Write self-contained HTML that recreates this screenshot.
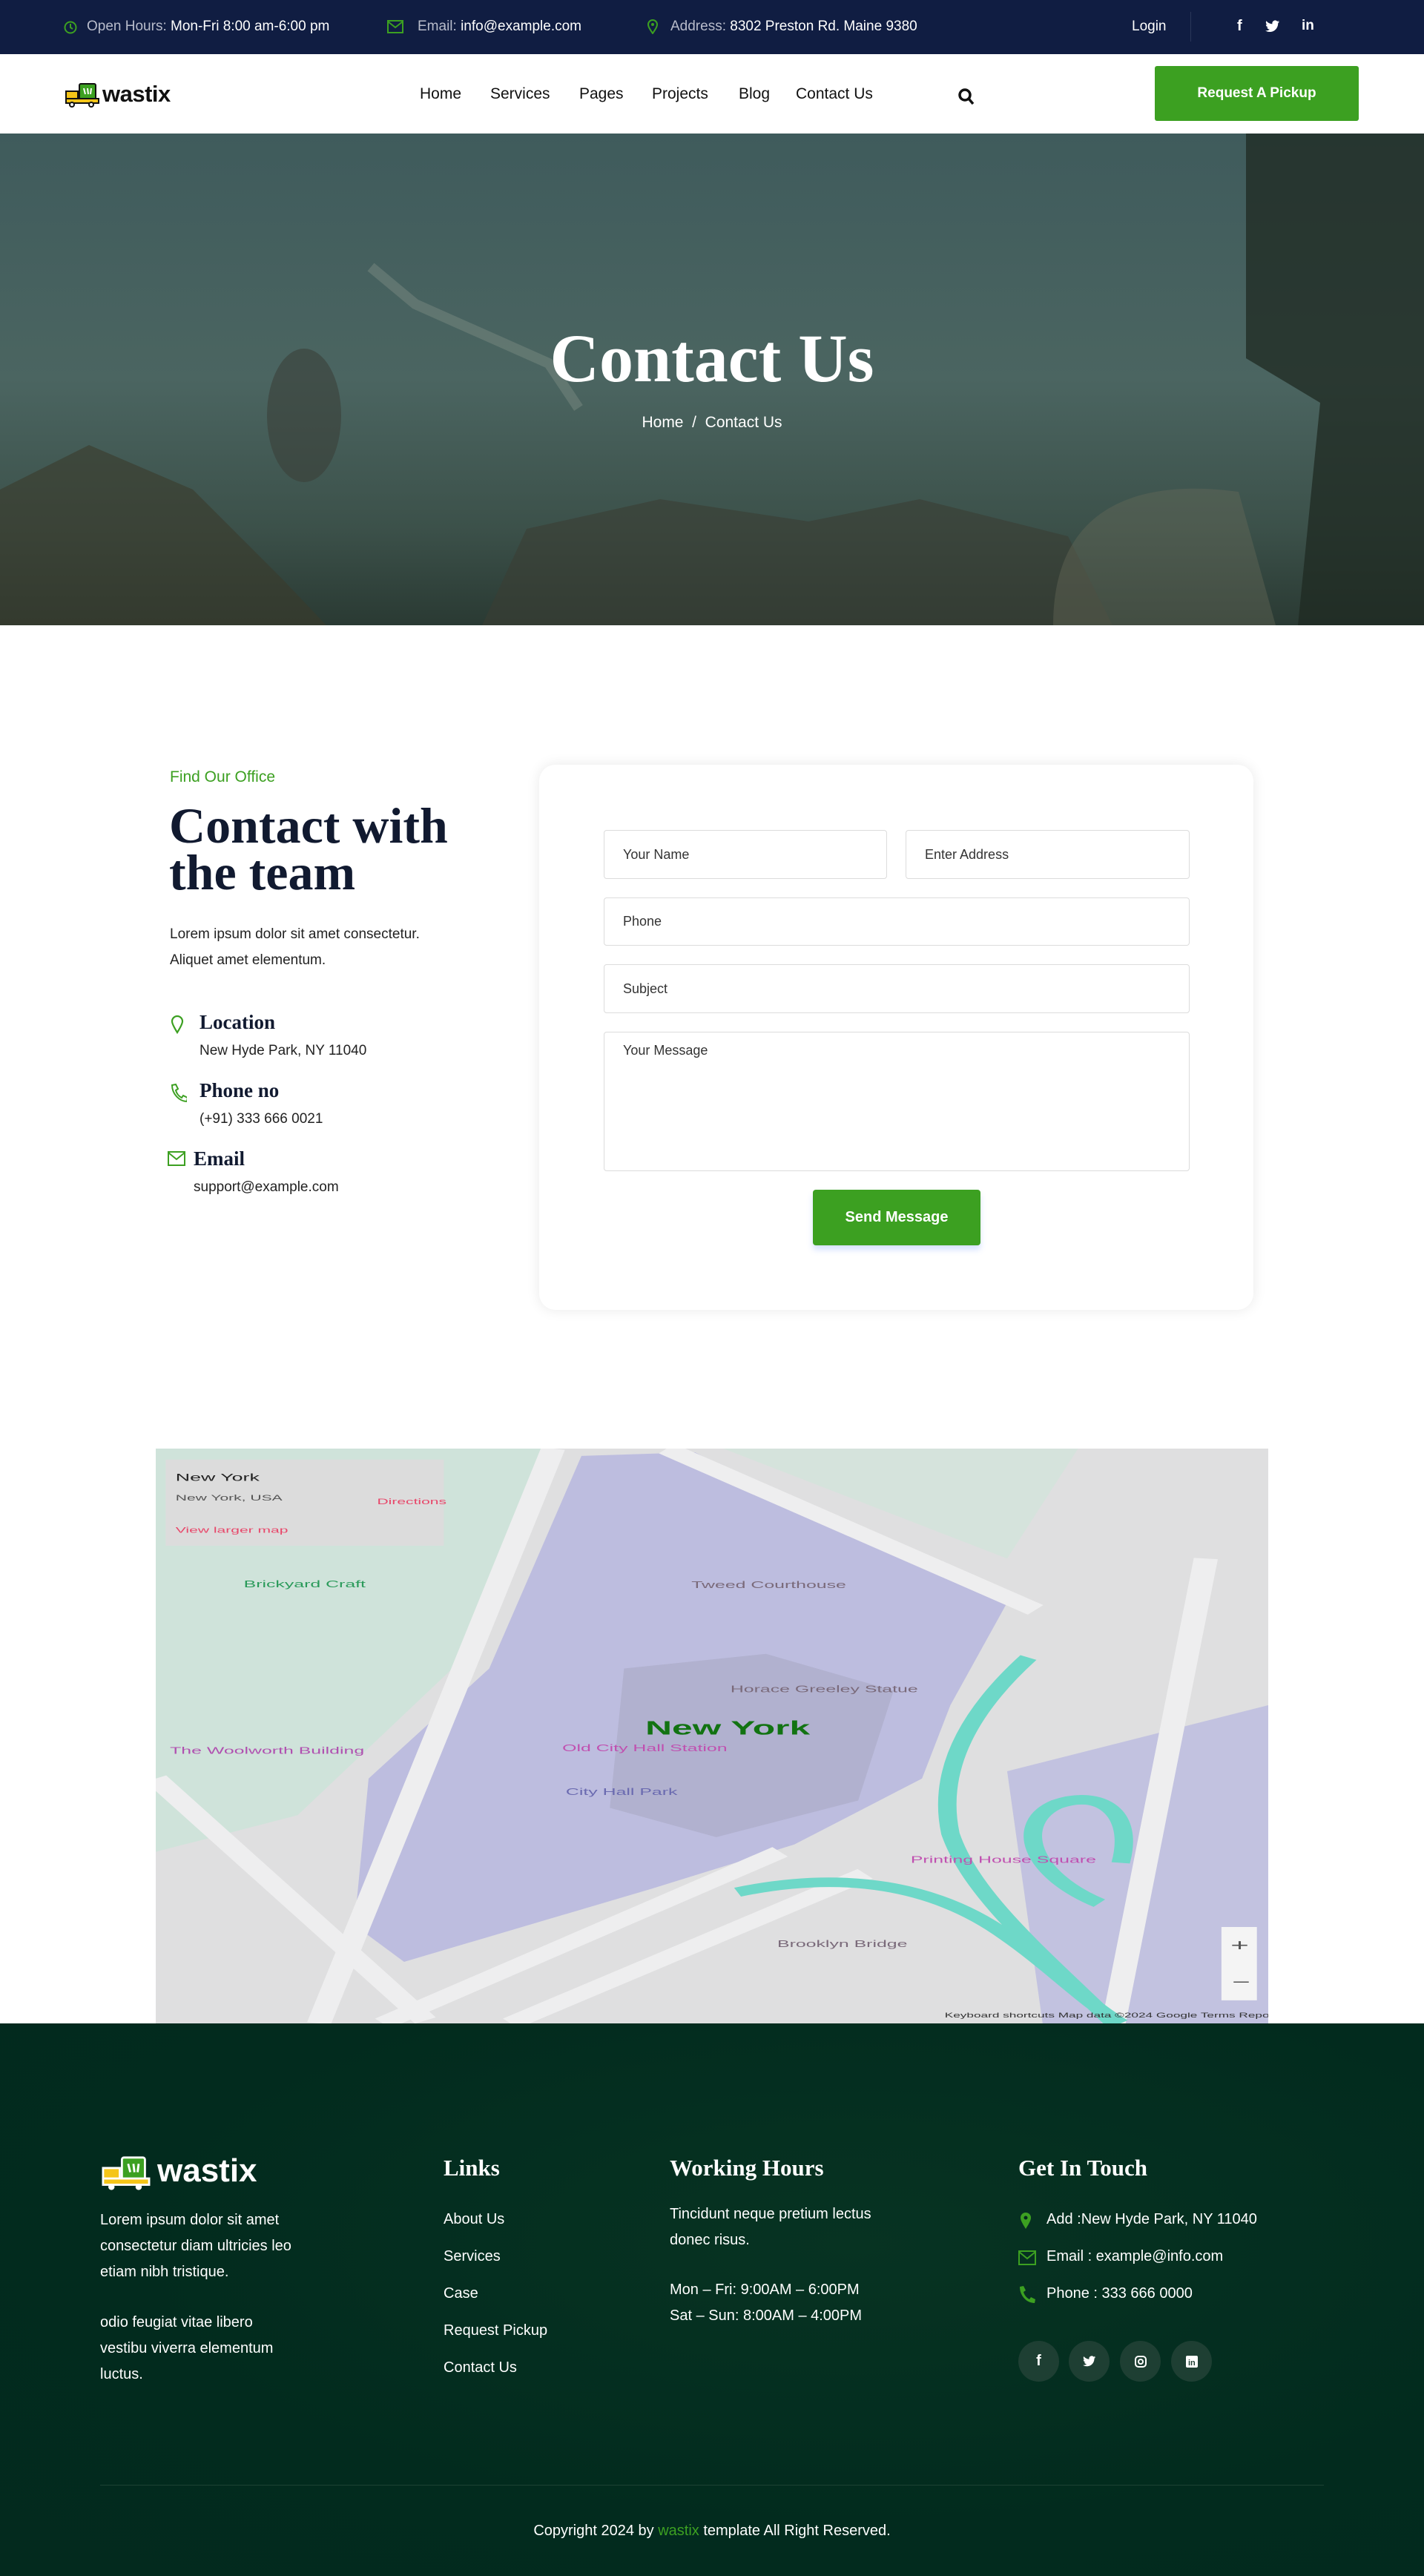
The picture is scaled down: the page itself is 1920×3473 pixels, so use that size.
<!DOCTYPE html>
<html><head><meta charset="utf-8">
<style>
*{margin:0;padding:0;box-sizing:border-box}
body{width:1920px;height:3473px;position:relative;font-family:"Liberation Sans",sans-serif;background:#fff;overflow:hidden;color:#1a1a2e}
.abs{position:absolute}
.top{left:0;top:0;width:1920px;height:73px;background:#101d42;color:#fff;font-size:19px}
.top span.l{color:#b8bccb}
.nav{top:73px;left:0;width:1920px;height:107px;background:#fff}
.nav a{position:absolute;top:42px;font-size:21px;color:#111}
.hero{top:180px;left:0;width:1920px;height:663px;background:linear-gradient(180deg,#3f5b5c 0%,#4b6561 50%,#3c514a 80%,#2a3a33 100%);overflow:hidden}
.serif{font-family:"Liberation Serif",serif;font-weight:bold}
.inp{position:absolute;border:1px solid #dcdcdc;border-radius:4px;background:#fff;font-size:18px;color:#333;padding-left:25px;display:flex;align-items:center}
.foot{top:2728px;left:0;width:1920px;height:745px;background:radial-gradient(ellipse at 60% 40%,#073322 0%,#022b1e 60%,#032a1e 100%)}
.fw{color:#fff;font-size:20px}
.circ{position:absolute;width:55px;height:55px;border-radius:50%;background:#1e3f33;color:#fff;display:flex;align-items:center;justify-content:center;font-size:20px;font-weight:bold}
</style></head><body>

<div class="abs top">
 <svg class="abs" style="left:86px;top:27px" width="18" height="20" viewBox="0 0 18 20"><circle cx="9" cy="10" r="7.5" fill="none" stroke="#3ca021" stroke-width="2"/><path d="M9 5v5l3 2" stroke="#3ca021" stroke-width="2" fill="none"/></svg>
 <div class="abs" style="left:117px;top:25px"><span class="l">Open Hours:</span> Mon-Fri 8:00 am-6:00 pm</div>
 <svg class="abs" style="left:522px;top:27px" width="22" height="18" viewBox="0 0 22 18"><rect x="1" y="1" width="20" height="16" fill="none" stroke="#3ca021" stroke-width="2"/><path d="M1 2l10 8 10-8" stroke="#3ca021" stroke-width="2" fill="none"/></svg>
 <div class="abs" style="left:563px;top:25px"><span class="l">Email:</span> info@example.com</div>
 <svg class="abs" style="left:873px;top:26px" width="14" height="20" viewBox="0 0 14 20"><path d="M7 19C3 13 1 10 1 7a6 6 0 0112 0c0 3-2 6-6 12z" fill="none" stroke="#3ca021" stroke-width="2"/><circle cx="7" cy="7" r="2" fill="#3ca021"/></svg>
 <div class="abs" style="left:904px;top:25px"><span class="l">Address:</span> 8302 Preston Rd. Maine 9380</div>
 <div class="abs" style="left:1526px;top:25px">Login</div>
 <div class="abs" style="left:1605px;top:16px;width:1px;height:40px;background:#2b375a"></div>
 <div class="abs" style="left:1668px;top:24px;font-weight:bold;font-size:20px">f</div>
 <svg class="abs" style="left:1706px;top:27px" width="20" height="18" viewBox="0 0 24 20"><path d="M23 2a9 9 0 01-2.7.8A4.7 4.7 0 0022.4.2a9.4 9.4 0 01-3 1.1A4.7 4.7 0 0011.4 5.6 13.3 13.3 0 011.7.7a4.7 4.7 0 001.5 6.3A4.7 4.7 0 011 6.4a4.7 4.7 0 003.8 4.6 4.7 4.7 0 01-2.1.1 4.7 4.7 0 004.4 3.2A9.4 9.4 0 010 16.3 13.3 13.3 0 007.2 18.4c8.6 0 13.4-7.2 13.4-13.4v-.6A9.6 9.6 0 0023 2z" fill="#fff"/></svg>
 <div class="abs" style="left:1755px;top:24px;font-weight:bold;font-size:19px">in</div>
</div>

<div class="abs nav">
 <svg class="abs" style="left:87px;top:38px" width="48" height="34" viewBox="0 0 48 34"><rect x="20" y="2" width="22" height="22" rx="2" fill="#3ca021" stroke="#111" stroke-width="2"/><path d="M26 8l2 8M31 8l1 8M36 8l-1 8" stroke="#fff" stroke-width="2"/><path d="M2 12h16v14H2z" fill="#f5c518" stroke="#111" stroke-width="2"/><rect x="2" y="22" width="44" height="6" fill="#f5c518" stroke="#111" stroke-width="2"/><circle cx="10" cy="30" r="3" fill="#fff" stroke="#111" stroke-width="2"/><circle cx="36" cy="30" r="3" fill="#fff" stroke="#111" stroke-width="2"/></svg>
 <div class="abs" style="left:138px;top:36px;font-size:31px;font-weight:bold;color:#111;letter-spacing:-.5px">wastix</div>
 <a style="left:566px">Home</a><a style="left:661px">Services</a><a style="left:781px">Pages</a><a style="left:879px">Projects</a><a style="left:996px">Blog</a><a style="left:1073px">Contact Us</a>
 <svg class="abs" style="left:1291px;top:45px" width="24" height="26" viewBox="0 0 24 26"><circle cx="10" cy="10" r="7" fill="none" stroke="#111" stroke-width="3.5"/><path d="M15 15l6 7" stroke="#111" stroke-width="3.5"/></svg>
 <div class="abs" style="left:1557px;top:16px;width:275px;height:74px;background:#3ca021;border-radius:3px;color:#fff;font-weight:bold;font-size:19px;display:flex;align-items:center;justify-content:center">Request A Pickup</div>
</div>

<div class="abs hero">
 <svg class="abs" style="left:0;top:0" width="1920" height="663" viewBox="0 0 1920 663">
  <path d="M1680 0h240v663h-170l30-300-100-60z" fill="#1f2a22" opacity=".75"/>
  <path d="M0 480l120-60 140 60 120 120 60 63H0z" fill="#3a3a2c" opacity=".6"/>
  <path d="M650 663l60-130 180-40 200 30 150-30 200 50 60 120z" fill="#3a3d33" opacity=".6"/>
  <path d="M500 180l60 50 180 80 40 60" stroke="#7e8f86" stroke-width="14" fill="none" opacity=".45"/>
  <ellipse cx="410" cy="380" rx="50" ry="90" fill="#3a4038" opacity=".6"/>
  <path d="M1420 663c0-150 100-200 250-180l50 180z" fill="#6a6b5a" opacity=".4"/>
 </svg>
 <div class="abs serif" style="left:0;width:1920px;top:250px;text-align:center;color:#fff;font-size:92px">Contact Us</div>
 <div class="abs" style="left:0;width:1920px;top:378px;text-align:center;color:#fff;font-size:21px">Home &nbsp;/&nbsp; Contact Us</div>
</div>

<div class="abs" style="left:229px;top:1036px;color:#3ca021;font-size:21px">Find Our Office</div>
<div class="abs serif" style="left:228px;top:1082px;font-size:68px;line-height:63px;color:#111a30">Contact with<br>the team</div>
<div class="abs" style="left:229px;top:1242px;font-size:19px;line-height:35px;color:#222">Lorem ipsum dolor sit amet consectetur.<br>Aliquet amet elementum.</div>
<svg class="abs" style="left:230px;top:1368px" width="18" height="26" viewBox="0 0 18 26"><path d="M9 24C4 16 2 12 2 9a7 7 0 0114 0c0 3-2 7-7 15z" fill="none" stroke="#3ca021" stroke-width="2.2"/></svg>
<div class="abs serif" style="left:269px;top:1363px;font-size:27px;color:#111a30">Location</div>
<div class="abs" style="left:269px;top:1406px;font-size:19px;color:#222">New Hyde Park, NY 11040</div>
<svg class="abs" style="left:228px;top:1460px" width="24" height="26" viewBox="0 0 24 26"><path d="M4 3l5-1 3 6-3 2c1 4 4 8 8 10l2-3 6 3-1 5c-10 0-20-10-20-22z" fill="none" stroke="#3ca021" stroke-width="2"/></svg>
<div class="abs serif" style="left:269px;top:1455px;font-size:27px;color:#111a30">Phone no</div>
<div class="abs" style="left:269px;top:1498px;font-size:19px;color:#222">(+91) 333 666 0021</div>
<svg class="abs" style="left:226px;top:1552px" width="24" height="20" viewBox="0 0 24 20"><rect x="1" y="1" width="22" height="18" fill="none" stroke="#3ca021" stroke-width="2"/><path d="M1 2l11 9 11-9" stroke="#3ca021" stroke-width="2" fill="none"/></svg>
<div class="abs serif" style="left:261px;top:1547px;font-size:27px;color:#111a30">Email</div>
<div class="abs" style="left:261px;top:1590px;font-size:19px;color:#222">support@example.com</div>

<div class="abs" style="left:727px;top:1031px;width:963px;height:735px;border-radius:22px;background:#fff;box-shadow:0 0 18px rgba(0,0,0,.09)"></div>
<div class="inp" style="left:814px;top:1119px;width:382px;height:66px">Your Name</div>
<div class="inp" style="left:1221px;top:1119px;width:383px;height:66px">Enter Address</div>
<div class="inp" style="left:814px;top:1210px;width:790px;height:65px">Phone</div>
<div class="inp" style="left:814px;top:1300px;width:790px;height:66px">Subject</div>
<div class="inp" style="left:814px;top:1391px;width:790px;height:188px;align-items:flex-start;padding-top:14px">Your Message</div>
<div class="abs" style="left:1096px;top:1604px;width:226px;height:75px;background:#3ca021;border-radius:4px;color:#fff;font-weight:bold;font-size:20px;display:flex;align-items:center;justify-content:center;box-shadow:0 6px 8px rgba(90,140,255,.25)">Send Message</div>

<svg class="abs" style="left:210px;top:1953px" width="1500" height="775" viewBox="0 0 1568 1568" preserveAspectRatio="none">
 <rect width="1568" height="1568" fill="#dfdfe0"/>
 <path d="M0 0h560L440 560 200 1000 0 1100z" fill="#cfe3da"/>
 <path d="M800 0h500l-100 300z" fill="#d5e3dc"/>
 <path d="M600 20l160-10 140 140 300 270-80 280-40 200-180 180-200 120-350 200-70-100 20-400 170-300z" fill="#bdbddf"/>
 <path d="M1200 880l368-180v868h-318z" fill="#c2c2e0"/>
 <path d="M660 600l200-40 180 100-50 300-200 100-150-80z" fill="#b1b1cf"/>
 <path d="M560 0L230 1568M0 900l380 660M720 0l520 440M880 1100L320 1568M1000 1160L500 1568M1480 300L1350 1568" stroke="#eeeeef" stroke-width="34" fill="none"/>
 <path d="M1230 570c-80 140-130 300-110 480 30 170 130 330 230 518M820 1210c150-60 280-20 380 120 60 80 110 180 160 238M1330 1240c-100-80-120-220-60-270 60-40 110 20 90 160" stroke="#6ed8c8" stroke-width="26" fill="none"/>
 <rect x="14" y="30" width="392" height="235" fill="#dcdcdc"/>
 <text x="28" y="88" font-family="Liberation Sans" font-size="28" fill="#222">New York</text>
 <text x="28" y="142" font-family="Liberation Sans" font-size="22" fill="#555">New York, USA</text>
 <text x="312" y="152" font-family="Liberation Sans" font-size="22" fill="#e8476a">Directions</text>
 <text x="28" y="230" font-family="Liberation Sans" font-size="22" fill="#e8476a">View larger map</text>
 <text x="690" y="780" font-family="Liberation Sans" font-size="52" font-weight="bold" fill="#127312">New York</text>
 <text x="755" y="380" font-family="Liberation Sans" font-size="26" fill="#7a6a7a">Tweed Courthouse</text>
 <text x="810" y="665" font-family="Liberation Sans" font-size="26" fill="#7a6a7a">Horace Greeley Statue</text>
 <text x="573" y="825" font-family="Liberation Sans" font-size="26" fill="#c050b0">Old City Hall Station</text>
 <text x="578" y="945" font-family="Liberation Sans" font-size="26" fill="#6a6ab0">City Hall Park</text>
 <text x="20" y="833" font-family="Liberation Sans" font-size="26" fill="#b050b0">The Woolworth Building</text>
 <text x="124" y="378" font-family="Liberation Sans" font-size="26" fill="#2a9a5a">Brickyard Craft</text>
 <text x="1064" y="1130" font-family="Liberation Sans" font-size="26" fill="#c050b0">Printing House Square</text>
 <text x="876" y="1360" font-family="Liberation Sans" font-size="26" fill="#7a6a7a">Brooklyn Bridge</text>
 <text x="1112" y="1552" font-family="Liberation Sans" font-size="18" fill="#333">Keyboard shortcuts  Map data ©2024 Google  Terms  Report a map error</text>
 <rect x="1502" y="1305" width="50" height="200" fill="#f4f4f4"/>
 <text x="1515" y="1370" font-family="Liberation Sans" font-size="44" fill="#555">+</text>
 <text x="1517" y="1470" font-family="Liberation Sans" font-size="44" fill="#555">−</text>
</svg>

<div class="abs foot">
 <svg class="abs" style="left:135px;top:178px" width="70" height="48" viewBox="0 0 48 34"><rect x="20" y="2" width="22" height="22" rx="2" fill="#3ca021" stroke="#fff" stroke-width="2"/><path d="M26 8l2 8M31 8l1 8M36 8l-1 8" stroke="#fff" stroke-width="2"/><path d="M2 12h16v14H2z" fill="#f5c518" stroke="#fff" stroke-width="2"/><rect x="2" y="22" width="44" height="6" fill="#f5c518" stroke="#fff" stroke-width="2"/><circle cx="10" cy="30" r="3" fill="#fff"/><circle cx="36" cy="30" r="3" fill="#fff"/></svg>
 <div class="abs" style="left:212px;top:174px;color:#fff;font-size:44px;font-weight:bold">wastix</div>
 <div class="abs fw" style="left:135px;top:248px;line-height:35px">Lorem ipsum dolor sit amet<br>consectetur diam ultricies leo<br>etiam nibh tristique.</div>
 <div class="abs fw" style="left:135px;top:386px;line-height:35px">odio feugiat vitae libero<br>vestibu viverra elementum<br>luctus.</div>
 <div class="abs serif" style="left:598px;top:177px;color:#fff;font-size:31px">Links</div>
 <div class="abs fw" style="left:598px;top:239px;line-height:50px">About Us<br>Services<br>Case<br>Request Pickup<br>Contact Us</div>
 <div class="abs serif" style="left:903px;top:177px;color:#fff;font-size:31px">Working Hours</div>
 <div class="abs fw" style="left:903px;top:240px;line-height:35px">Tincidunt neque pretium lectus<br>donec risus.</div>
 <div class="abs fw" style="left:903px;top:342px;line-height:35px">Mon – Fri: 9:00AM – 6:00PM<br>Sat – Sun: 8:00AM – 4:00PM</div>
 <div class="abs serif" style="left:1373px;top:177px;color:#fff;font-size:31px">Get In Touch</div>
 <svg class="abs" style="left:1375px;top:254px" width="16" height="24" viewBox="0 0 16 24"><path d="M8 23C3 15 1 11 1 8a7 7 0 0114 0c0 3-2 7-7 15z" fill="#3ca021"/><circle cx="8" cy="8" r="2.5" fill="#032a1e"/></svg>
 <div class="abs fw" style="left:1411px;top:253px">Add :New Hyde Park, NY 11040</div>
 <svg class="abs" style="left:1373px;top:306px" width="24" height="20" viewBox="0 0 24 20"><rect x="1" y="1" width="22" height="18" fill="none" stroke="#3ca021" stroke-width="2"/><path d="M1 2l11 9 11-9" stroke="#3ca021" stroke-width="2" fill="none"/></svg>
 <div class="abs fw" style="left:1411px;top:303px">Email : example@info.com</div>
 <svg class="abs" style="left:1373px;top:352px" width="24" height="26" viewBox="0 0 24 26"><path d="M2 3l5-1 3 6-3 2c1 4 4 8 8 10l2-3 6 3-1 5C11 25 2 15 2 3z" fill="#3ca021"/></svg>
 <div class="abs fw" style="left:1411px;top:353px">Phone : 333 666 0000</div>
 <div class="circ" style="left:1373px;top:428px">f</div>
 <div class="circ" style="left:1441px;top:428px"><svg width="18" height="16" viewBox="0 0 24 20"><path d="M23 2a9 9 0 01-2.7.8A4.7 4.7 0 0022.4.2a9.4 9.4 0 01-3 1.1A4.7 4.7 0 0011.4 5.6 13.3 13.3 0 011.7.7a4.7 4.7 0 001.5 6.3A4.7 4.7 0 011 6.4a4.7 4.7 0 003.8 4.6 4.7 4.7 0 01-2.1.1 4.7 4.7 0 004.4 3.2A9.4 9.4 0 010 16.3 13.3 13.3 0 007.2 18.4c8.6 0 13.4-7.2 13.4-13.4v-.6A9.6 9.6 0 0023 2z" fill="#fff"/></svg></div>
 <div class="circ" style="left:1510px;top:428px"><svg width="16" height="16" viewBox="0 0 16 16"><rect x="1" y="1" width="14" height="14" rx="4" fill="none" stroke="#fff" stroke-width="2"/><circle cx="8" cy="8" r="3" fill="none" stroke="#fff" stroke-width="2"/></svg></div>
 <div class="circ" style="left:1579px;top:428px"><svg width="16" height="16" viewBox="0 0 16 16"><rect width="16" height="16" rx="2" fill="#fff"/><text x="3" y="13" font-family="Liberation Sans" font-size="11" font-weight="bold" fill="#1e3f33">in</text></svg></div>
 <div class="abs" style="left:135px;top:622px;width:1650px;height:1px;background:#1d4234"></div>
 <div class="abs fw" style="left:0;width:1920px;top:673px;text-align:center;font-size:20px">Copyright 2024 by <span style="color:#3ca021">wastix</span> template All Right Reserved.</div>
</div>
</body></html>
